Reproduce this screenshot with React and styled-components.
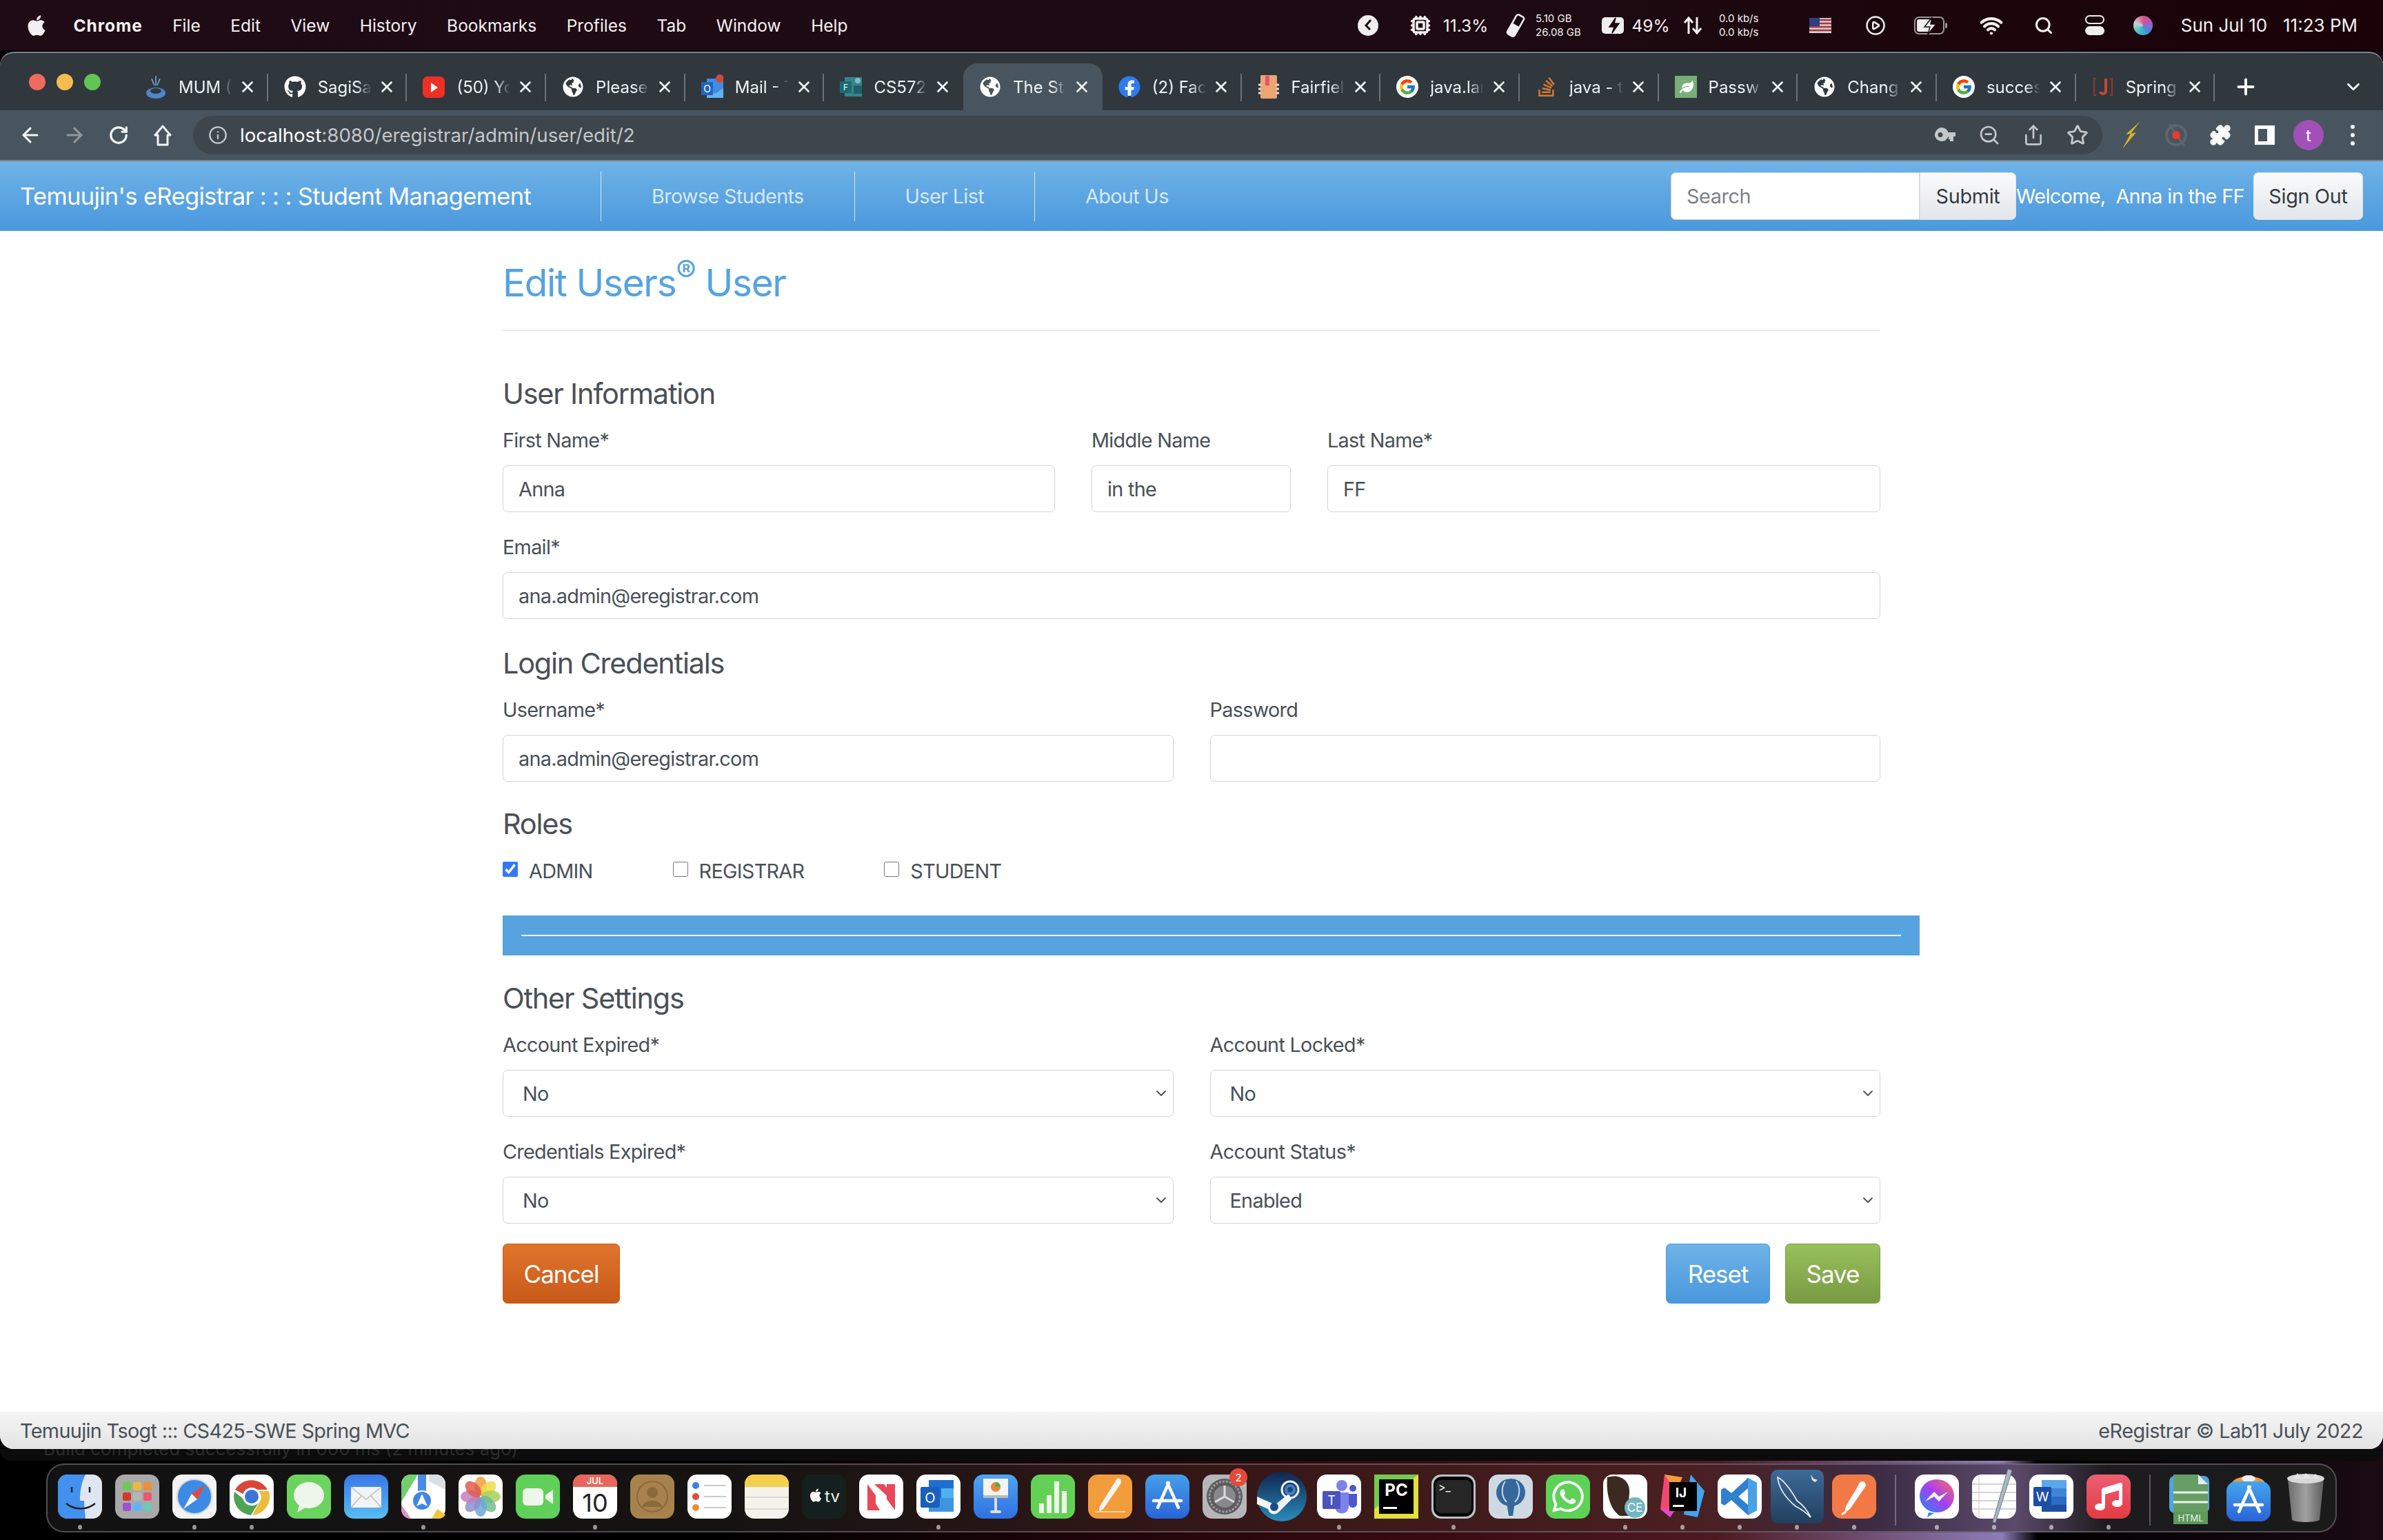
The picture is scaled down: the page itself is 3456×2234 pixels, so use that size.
import React from 'react';
import styled, { createGlobalStyle } from 'styled-components';
import {
  ArrowLeft, ArrowRight, RotateCw, Info, ZoomOut, Share, Star, Puzzle, Plus, ChevronDown,
  X, Cpu, Search, CirclePlay, Wifi,
} from 'lucide-react';
import { FaApple, FaGithub, FaGlobeAmericas, FaFacebook, FaStackOverflow, FaLeaf, FaMusic, FaWhatsapp } from 'react-icons/fa';
import { FcGoogle } from 'react-icons/fc';

const GlobalStyle = createGlobalStyle`
  html, body { margin: 0; padding: 0; background: #000; }
  body { font-family: Inter, "Noto Sans", sans-serif; }
  * { box-sizing: border-box; }
`;

const Desktop = styled.div`
  width: 3456px;
  height: 2234px;
  overflow: hidden;
  display: flex;
  flex-direction: column;
  background: linear-gradient(90deg, #000 0%, #000 30%, #3a0a12 60%, #4d1a22 72%, #8d7cb8 84%, #000 85.5%, #1a0a14 100%);
`;

/* menu bar */
const MenuBar = styled.div`
  height: 75px;
  flex: none;
  display: flex;
  align-items: center;
  padding: 0 33px 0 36px;
  color: #f4f0f1;
  background: linear-gradient(90deg, #1f0b15, #1d0a12 60%, #1a0207);
  border-bottom: 2px solid #0a0406;
`;

const MenuItems = styled.div`
  display: flex;
  align-items: center;
  gap: 43.5px;
  font-size: 24.5px;
`;

const AppleSlot = styled.span`
  display: flex;
  margin-right: -7px;
`;

const MenuItem = styled.span`
  font-weight: ${p => (p.$bold ? 700 : 400)};
  letter-spacing: ${p => (p.$bold ? '0.9px' : '0')};
`;

const StatusRow = styled.div`
  margin-left: auto;
  display: flex;
  align-items: center;
`;

const StatusSlot = styled.div`
  width: ${p => p.$w}px;
  margin-left: ${p => p.$ml}px;
  display: flex;
  align-items: center;
  justify-content: center;
  flex: none;
  white-space: nowrap;
  font-size: ${p => p.$fs || 24.5}px;
`;

const TinyStack = styled.div`
  display: flex;
  flex-direction: column;
  align-items: flex-start;
  font-size: 15px;
  line-height: 20px;
  width: 100%;
`;

const Siri = styled.div`
  width: 28px;
  height: 28px;
  border-radius: 50%;
  background: conic-gradient(#e0508a, #a55bd0, #3f8fd8, #3fc4c0, #c9d0d4, #e0508a);
`;

const ControlCenter = styled.div`
  display: flex;
  flex-direction: column;
  gap: 3px;
`;

const ControlPill = styled.div`
  width: 28px;
  height: 13px;
  border-radius: 7px;
  background: ${p => (p.$on ? '#efefef' : 'transparent')};
  border: 2px solid #efefef;
`;

/* browser window */
const Window = styled.div`
  height: 2027px;
  flex: none;
  display: flex;
  flex-direction: column;
  overflow: hidden;
  border-radius: 20px;
  border-top: 2px solid #7b8285;
  background: #fff;
`;

const TabStrip = styled.div`
  height: 83px;
  flex: none;
  display: flex;
  align-items: flex-end;
  background: #30383e;
`;

const Lights = styled.div`
  width: 187px;
  height: 83px;
  flex: none;
  display: flex;
  align-items: center;
  gap: 16px;
  padding: 0 0 0 42px;
`;

const Light = styled.span`
  width: 24px;
  height: 24px;
  border-radius: 50%;
  background: ${p => p.$c};
`;

const Tab = styled.div`
  width: 201.7px;
  height: 68px;
  flex: none;
  display: flex;
  align-items: center;
  position: relative;
  padding-left: 23px;
  color: #f1f3f4;
  font-size: 24px;
  background: ${p => (p.$active ? '#48555e' : 'transparent')};
  border-radius: 20px 20px 0 0;
  &::after {
    content: '';
    display: ${p => (p.$noSep ? 'none' : 'block')};
    position: absolute;
    right: 0;
    top: 15px;
    height: 40px;
    width: 2px;
    background: #6c7377;
  }
`;

const Favicon = styled.span`
  width: 32px;
  height: 32px;
  flex: none;
  display: flex;
  align-items: center;
  justify-content: center;
`;

const GoogleBadge = styled.span`
  display: flex;
  padding: 3px;
  border-radius: 50%;
  background: #fff;
`;

const FacebookBadge = styled.span`
  display: flex;
  border-radius: 50%;
  background: radial-gradient(#fff 55%, transparent 60%);
  color: #2d7cf0;
`;

const TabTitle = styled.span`
  width: 78px;
  margin-left: 17px;
  overflow: hidden;
  white-space: nowrap;
  flex: none;
  -webkit-mask-image: linear-gradient(90deg, #000 72%, transparent 100%);
  mask-image: linear-gradient(90deg, #000 72%, transparent 100%);
`;

const TabClose = styled.span`
  display: flex;
  margin-left: 9px;
`;

const TabTools = styled.div`
  flex: 1;
  height: 68px;
  display: flex;
  align-items: center;
  justify-content: space-between;
  padding: 0 28px 0 27px;
  color: #fff;
`;

const Toolbar = styled.div`
  height: 74px;
  flex: none;
  display: flex;
  align-items: center;
  padding: 0 12px;
  background: #48555e;
  border-bottom: 2px solid #7f8488;
`;

const ToolButton = styled.span`
  width: 64px;
  flex: none;
  display: flex;
  justify-content: center;
  align-items: center;
  color: ${p => p.$c || '#f1f3f4'};
`;

const Omnibox = styled.div`
  flex: 1;
  height: 56px;
  margin: 0 11px 0 12px;
  border-radius: 28px;
  background: #3e464d;
  display: flex;
  align-items: center;
  padding-left: 22px;
  font-size: 27.7px;
  color: #c3c7ca;
`;

const Url = styled.span`
  margin-left: 18px;
  b { font-weight: 400; color: #fff; }
`;

const OmniIcons = styled.div`
  margin-left: auto;
  margin-right: 4px;
  display: flex;
`;

const SidePanelIcon = styled.span`
  width: 29px;
  height: 28px;
  border: 5px solid #fff;
  border-right-width: 11px;
`;

const Avatar = styled.span`
  width: 44px;
  height: 44px;
  border-radius: 50%;
  background: #a24fb8;
  color: #fff;
  font-size: 24px;
  display: flex;
  align-items: center;
  justify-content: center;
`;

const KebabDots = styled.span`
  display: flex;
  flex-direction: column;
  gap: 6px;
  i { width: 6px; height: 6px; border-radius: 50%; background: #f1f3f4; display: block; }
`;

/* site navbar */
const Navbar = styled.nav`
  height: 101px;
  flex: none;
  display: flex;
  align-items: center;
  padding: 0 29px;
  background: linear-gradient(180deg, #6fb3e7, #4a98dd);
  color: #fff;
  font-size: 28.8px;
  letter-spacing: -0.65px;
`;

const Brand = styled.div`
  width: 842px;
  flex: none;
  font-size: 34.5px;
  white-space: nowrap;
`;

const NavLink = styled.a`
  height: 72px;
  display: flex;
  align-items: center;
  padding: 0 73px;
  border-left: 1.5px solid rgba(255, 255, 255, 0.75);
  color: rgba(255, 255, 255, 0.75);
`;

const NavRight = styled.div`
  margin-left: auto;
  display: flex;
  align-items: center;
`;

const SearchBox = styled.input`
  width: 361px;
  height: 69px;
  border: 1.5px solid #ced4da;
  border-radius: 7px 0 0 7px;
  padding: 0 22px;
  font: inherit;
  letter-spacing: -0.4px;
  color: #495057;
  &::placeholder { color: #7b8188; opacity: 1; }
`;

const LightButton = styled.button`
  width: ${p => p.$w}px;
  height: 69px;
  font: inherit;
  letter-spacing: -0.3px;
  color: #343a40;
  padding: 0;
  border: 1px solid #e0e3e6;
  border-radius: ${p => (p.$joined ? '0 7px 7px 0' : '7px')};
  background: linear-gradient(180deg, #fbfbfc, #e2e6ea);
`;

const Welcome = styled.span`
  width: 344px;
  white-space: nowrap;
`;

/* page body */
const Main = styled.main`
  flex: 1;
  padding-left: 729px;
  background: #fff;
  color: #495057;
`;

const Sheet = styled.div`
  width: 2055px;
`;

const Inner = styled.div`
  width: 1998px;
`;

const PageTitle = styled.h1`
  margin: 42px 0 0;
  font-size: 55px;
  line-height: 66px;
  font-weight: 400;
  color: #56a3e0;
  letter-spacing: -1.4px;
  sup { font-size: 44px; line-height: 0; vertical-align: 21px; }
`;

const TitleRule = styled.hr`
  margin: 35px 0 0;
  border: 0;
  height: 2px;
  background: #e8e9ea;
`;

const SectionTitle = styled.h2`
  margin: ${p => p.$mt}px 0 22px;
  font-size: 41.5px;
  line-height: 48px;
  font-weight: 400;
  color: #495057;
  letter-spacing: -1.25px;
`;

const FieldRow = styled.div`
  display: flex;
  gap: 53px;
`;

const Field = styled.div`
  margin-bottom: 29px;
  flex: ${p => (p.$w ? `0 0 ${p.$w}px` : '1')};
  min-width: 0;
  position: relative;
`;

const Label = styled.label`
  display: block;
  font-size: 28.8px;
  line-height: 44px;
  margin-bottom: 14px;
  letter-spacing: -0.7px;
`;

const TextInput = styled.input`
  display: block;
  width: 100%;
  height: 68px;
  padding: 0 22px;
  border: 1.5px solid #d0d5da;
  border-radius: 7px;
  font: inherit;
  font-size: 28.8px;
  letter-spacing: -0.7px;
  color: #495057;
  background: #fff;
`;

const SelectInput = styled.select`
  display: block;
  width: 100%;
  height: 68px;
  padding: 0 28px;
  border: 1.5px solid #d0d5da;
  border-radius: 7px;
  font: inherit;
  font-size: 28.8px;
  letter-spacing: -0.7px;
  color: #495057;
  background: #fff;
  appearance: none;
`;

const SelectCaret = styled.span`
  position: absolute;
  right: 6px;
  bottom: 22px;
  display: flex;
  color: #495057;
  pointer-events: none;
`;

const RoleRow = styled.div`
  display: flex;
  gap: 116px;
  height: 44px;
  align-items: center;
`;

const Role = styled.label`
  display: flex;
  align-items: center;
  gap: 16px;
  font-size: 28.8px;
  letter-spacing: -0.7px;
`;

const RoleCheck = styled.input`
  width: 22px;
  height: 22px;
  margin: -4px 0 0;
  accent-color: #3478f6;
`;

const BlueBar = styled.div`
  margin-top: 43px;
  height: 58px;
  padding: 0 27px;
  display: flex;
  align-items: center;
  background: #56a3e0;
`;

const BarLine = styled.hr`
  width: 100%;
  margin: 0;
  border: 0;
  height: 2px;
  background: #fff;
`;

const ActionRow = styled.div`
  display: flex;
  align-items: flex-start;
  gap: 22px;
`;

const ActionButton = styled.button`
  width: ${p => p.$w}px;
  height: 87px;
  font: inherit;
  font-size: 35px;
  letter-spacing: -1px;
  color: #fff;
  padding: 0;
  border: 1px solid ${p => p.$to};
  border-radius: 7px;
  background: linear-gradient(180deg, ${p => p.$from}, ${p => p.$to});
  margin-left: ${p => (p.$push ? 'auto' : '0')};
`;

const Footer = styled.footer`
  height: 54px;
  flex: none;
  display: flex;
  align-items: center;
  justify-content: space-between;
  padding: 0 29px;
  font-size: 28.8px;
  color: #495057;
  background: linear-gradient(180deg, #f5f5f5, #e3e3e3);
`;

const FooterNote = styled.span`
  letter-spacing: ${p => p.$ls}px;
`;

/* what shows under the browser */
const IdeStrip = styled.div`
  height: 17px;
  flex: none;
  overflow: hidden;
  background: #0b0c0b;
  border-radius: 0 0 16px 16px;
  padding-left: 63px;
  color: #2b2d2b;
  font-size: 26px;
  line-height: 0;
  white-space: nowrap;
`;

const Dock = styled.div`
  width: 3322px;
  height: 100px;
  margin: 4px 0 0 67px;
  flex: none;
  display: flex;
  padding: 14px 0 0 15px;
  gap: 19px;
  border: 2px solid rgba(120, 115, 125, 0.6);
  border-radius: 26px;
  background: linear-gradient(90deg, #121212 0%, #151312 30%, #361717 52%, #4a1f22 72%, #3d2c44 80%, #5b4a6b 86%, #1d1b1d 90%, #1a1a1a 100%);
`;

const DockItem = styled.div`
  width: 64px;
  flex: none;
  display: flex;
  flex-direction: column;
  align-items: center;
  gap: 9px;
  margin-left: ${p => (p.$ml ? `${p.$ml}px` : '0')};
`;

const DockIcon = styled.svg`
  width: 64px;
  height: 64px;
  display: block;
  overflow: visible;
  font-family: Inter, sans-serif;
`;

const RunDot = styled.span`
  width: 6px;
  height: 7px;
  border-radius: 50%;
  background: ${p => (p.$on ? 'rgba(255,255,255,0.55)' : 'transparent')};
`;

const DockSeparator = styled.div`
  width: 2px;
  height: 74px;
  flex: none;
  margin-left: 8px;
  background: rgba(255, 255, 255, 0.28);
`;

const KeyIcon = () => (
  <svg width="30" height="24" viewBox="0 0 30 24" fill="currentColor">
    <path d="M10 1a10 10 0 1 1-9.6 13H0v-4h.4A10 10 0 0 1 10 1zm-2 7a3.5 3.5 0 1 0 0 7 3.5 3.5 0 0 0 0-7z" fillRule="evenodd" />
    <path d="M16 8h14v6h-3v7h-5v-3h-2v-4h-4z" />
  </svg>
);

const HomeIcon = () => (
  <svg width="26" height="32" viewBox="0 0 26 32" fill="none" stroke="currentColor" strokeWidth="3">
    <path d="M13 3L2 16h4v14h14V16h4z" strokeLinejoin="round" />
  </svg>
);

const UpDownIcon = () => (
  <svg width="28" height="26" viewBox="0 0 28 26" fill="none" stroke="#f4f0f1" strokeWidth="3">
    <path d="M8 25V3M2 9l6-7 6 7M20 1v22M14 17l6 7 6-7" />
  </svg>
);

const statusItems = [
  { w: 48, ml: 0, node: <svg width="32" height="32" viewBox="0 0 32 32"><circle cx="16" cy="16" r="15" fill="#eee" /><path d="M20 8l-7 8 6 6" fill="none" stroke="#1e0a14" strokeWidth="3" /></svg> },
  { w: 40, ml: 32, node: <Cpu size={30} strokeWidth={2.8} /> },
  { w: 65, ml: 13, node: '11.3%' },
  { w: 32, ml: 24, node: <svg width="30" height="34" viewBox="0 0 30 34"><g transform="rotate(30 15 17)"><rect x="9" y="1" width="12" height="32" rx="3" fill="none" stroke="#eee" strokeWidth="2.5" /><rect x="9" y="16" width="12" height="17" rx="3" fill="#eee" /></g></svg> },
  { w: 73, ml: 13, node: <TinyStack><span>5.10 GB</span><span>26.08 GB</span></TinyStack> },
  { w: 36, ml: 22, node: <svg width="34" height="24" viewBox="0 0 34 24"><rect width="32" height="24" rx="5" fill="#eee" /><path d="M20 1L11 14h7l-3 9 10-14h-7z" fill="#1d0a12" stroke="#1d0a12" strokeWidth="1.5" /></svg> },
  { w: 50, ml: 11, node: '49%' },
  { w: 28, ml: 22, node: <UpDownIcon /> },
  { w: 62, ml: 24, node: <TinyStack><span>0.0 kb/s</span><span>0.0 kb/s</span></TinyStack> },
  { w: 32, ml: 69, node: <svg width="32" height="22" viewBox="0 0 32 22"><rect width="32" height="22" fill="#c9d2e4" /><path d="M0 3h32M0 8h32M0 13h32M0 18h32" stroke="#b5332e" strokeWidth="2.6" /><rect width="15" height="12" fill="#2f3f7f" /></svg> },
  { w: 30, ml: 49, node: <CirclePlay size={30} strokeWidth={2} /> },
  { w: 50, ml: 41, node: <svg width="50" height="26" viewBox="0 0 50 26"><rect x="1" y="1" width="42" height="24" rx="6" fill="none" stroke="#9a9597" strokeWidth="2" /><rect x="4" y="4" width="20" height="18" rx="3" fill="#eee" /><rect x="45" y="9" width="3" height="8" rx="1.5" fill="#9a9597" /><path d="M26 1L15 15h8l-3 11 12-15h-8z" fill="#eee" stroke="#1d0a12" strokeWidth="1.5" /></svg> },
  { w: 36, ml: 44, node: <Wifi size={34} strokeWidth={3} /> },
  { w: 30, ml: 43, node: <Search size={28} strokeWidth={2.6} /> },
  { w: 30, ml: 44, node: <ControlCenter><ControlPill /><ControlPill $on /></ControlCenter> },
  { w: 30, ml: 40, node: <Siri /> },
  { w: 125, ml: 40, fs: 26, node: 'Sun Jul 10' },
  { w: 116, ml: 19, fs: 26, node: '11:23 PM' },
];

const tabs = [
  { title: 'MUM (', icon: <svg width="32" height="36" viewBox="0 0 32 36"><ellipse cx="16" cy="27" rx="14" ry="8" fill="#4f86c9" /><ellipse cx="16" cy="24" rx="8" ry="4" fill="#30383e" /><path d="M16 2v14M10 6l4 10M22 6l-4 10" stroke="#7fb0e0" strokeWidth="1.5" /></svg> },
  { title: 'SagiSa', icon: <FaGithub size={32} color="#fff" /> },
  { title: '(50) Yo', icon: <svg width="32" height="32" viewBox="0 0 32 32"><rect width="32" height="31" rx="7" y="1" fill="#ee2f24" /><path d="M12 10l10 7-10 7z" fill="#fff" /></svg> },
  { title: 'Please', icon: <FaGlobeAmericas size={30} color="#fff" /> },
  { title: 'Mail - T', icon: <svg width="32" height="36" viewBox="0 0 32 36"><rect x="8" y="6" width="24" height="28" fill="#3f8de0" /><path d="M8 20l12 8 12-8v14H8z" fill="#62b2ef" /><rect y="11" width="17" height="19" fill="#1f64bf" /><text x="8.5" y="26" fontSize="14" fill="#fff" textAnchor="middle" fontFamily="Inter">O</text><circle cx="27" cy="6" r="6" fill="#d0493e" /></svg> },
  { title: 'CS572', noSep: true, icon: <svg width="32" height="32" viewBox="0 0 32 32"><rect x="7" y="2" width="25" height="28" fill="#37858c" /><rect x="20" y="14" width="12" height="12" fill="#1f5f66" /><circle cx="26" cy="7" r="4" fill="#79c0c5" /><rect y="8" width="17" height="17" fill="#1a6b72" /><text x="8.5" y="21" fontSize="12" fill="#fff" textAnchor="middle" fontFamily="Inter">F</text></svg> },
  { title: 'The St', active: true, noSep: true, icon: <FaGlobeAmericas size={30} color="#fff" /> },
  { title: '(2) Fac', icon: <FacebookBadge><FaFacebook size={32} /></FacebookBadge> },
  { title: 'Fairfiel', icon: <svg width="30" height="34" viewBox="0 0 30 34"><rect x="3" y="0" width="24" height="34" rx="2" fill="#eda673" /><rect x="10" y="1" width="6" height="14" fill="#e2566c" /><path d="M0 14h4M0 20h4M0 26h4M26 14h4M26 20h4M26 26h4" stroke="#dfe2e4" strokeWidth="3" /></svg> },
  { title: 'java.lan', icon: <GoogleBadge><FcGoogle size={26} /></GoogleBadge> },
  { title: 'java - t', icon: <FaStackOverflow size={32} color="#d9782e" /> },
  { title: 'Passw', icon: <svg width="32" height="32" viewBox="0 0 32 32"><rect width="32" height="32" fill="#78ae78" /><FaLeaf x="7" y="6" size={20} color="#fff" /></svg> },
  { title: 'Chang', icon: <FaGlobeAmericas size={30} color="#fff" /> },
  { title: 'succes', icon: <GoogleBadge><FcGoogle size={26} /></GoogleBadge> },
  { title: 'Spring', icon: <svg width="32" height="30" viewBox="0 0 32 30"><path d="M6 3H3v24h3M26 3h3v24h-3" fill="none" stroke="#8e3a28" strokeWidth="2" /><path d="M20 3v18c0 5-7 5-8 1" fill="none" stroke="#c04a2c" strokeWidth="4" /></svg> },
];

const Tile = ({ fill, children, rx = 14 }) => (
  <DockIcon viewBox="0 0 64 64">
    <rect width="64" height="64" rx={rx} fill={fill} />
    {children}
  </DockIcon>
);

const Grad = ({ id, from, to }) => (
  <defs>
    <linearGradient id={id} x1="0" y1="0" x2="0" y2="1">
      <stop offset="0" stopColor={from} />
      <stop offset="1" stopColor={to} />
    </linearGradient>
  </defs>
);

const petals = ['#f0a03c', '#f1dc4c', '#a9cf5e', '#6ebd8f', '#6aa9d8', '#8b8fd0', '#c27fb8', '#e05c50'];

const appStoreGlyph = (
  <g stroke="#fff" strokeWidth="4.5" strokeLinecap="round" fill="none">
    <path d="M32 12l16 36M34 12L18 48M12 38h40" />
  </g>
);

const dockApps = [
  { on: true, icon: <Tile fill="#dfe6f0"><path d="M14 0h26c-6 12-8 24-8 38h6c0 8 1 16 2 26H14C6 64 0 58 0 50V14C0 6 6 0 14 0z" fill="#4391ee" /><path d="M20 18v8M46 18v8" stroke="#222" strokeWidth="2.5" /><path d="M12 42c12 10 30 10 42 0" fill="none" stroke="#222" strokeWidth="2.5" /></Tile> },
  { icon: <Tile fill="#a9a9a9">{[['#6ccc50', '#f0b740', '#ed8f35'], ['#cf3a2b', '#b3b7b9', '#ea5a6b'], ['#9a52d8', '#5ab8f5', '#6fc8b0']].map((r, j) => r.map((c, i) => <rect key={`${i}${j}`} x={11 + i * 15} y={11 + j * 15} width="12" height="12" rx="3" fill={c} />))}</Tile> },
  { on: true, icon: <Tile fill="#f3f3f3"><circle cx="32" cy="32" r="25" fill="#3c8ae4" /><circle cx="32" cy="32" r="25" fill="none" stroke="#cfd8e2" strokeWidth="2" /><path d="M48 14L28 28l8 8z" fill="#e8473a" /><path d="M16 50l12-22 8 8z" fill="#f4f4f4" /></Tile> },
  { on: true, icon: <Tile fill="#fff"><path d="M8 22a27 27 0 0 1 47 0H32a11 11 0 0 0-11 7z" fill="#d8473a" /><path d="M57 24a27 27 0 0 1-24 35l11-20a12 12 0 0 0-2-15z" fill="#efbb3c" /><path d="M7 25a27 27 0 0 0 24 34l11-18a12 12 0 0 1-20-4z" fill="#4fa354" /><circle cx="32" cy="32" r="13" fill="#fff" /><circle cx="32" cy="32" r="10" fill="#3b75d8" /></Tile> },
  { icon: <Tile fill="#6bd45f"><ellipse cx="32" cy="30" rx="22" ry="19" fill="#eef6ea" /><path d="M18 44l-3 11 12-7z" fill="#eef6ea" /></Tile> },
  { icon: <Tile fill="url(#mailG)"><Grad id="mailG" from="#3a77e6" to="#59bdf6" /><rect x="10" y="18" width="44" height="30" rx="2" fill="#f3f3f3" /><path d="M10 18l22 18 22-18M10 48l16-18M54 48L38 30" fill="none" stroke="#b9c0c8" strokeWidth="1.5" /></Tile> },
  { on: true, icon: <Tile fill="#fff"><path d="M0 14C0 6 6 0 14 0h10L0 40z" fill="#72cf6c" /><path d="M40 0h10c8 0 14 6 14 14v8L40 10z" fill="#dcdfe2" /><path d="M24 0h12v34H24z" fill="#4d8ae8" /><path d="M0 44l14 20C6 64 0 58 0 50z" fill="#de8fc0" /><path d="M44 64l8-14 12 8c-2 4-6 6-10 6z" fill="#f2c53c" /><circle cx="30" cy="38" r="14" fill="#3f86e6" stroke="#fff" strokeWidth="2" /><path d="M30 28l8 18-8-4-8 4z" fill="#fff" /></Tile> },
  { icon: <Tile fill="#fff">{petals.map((c, i) => <ellipse key={c} cx="32" cy="17" rx="9" ry="14" fill={c} opacity="0.85" transform={`rotate(${i * 45} 32 32)`} />)}</Tile> },
  { icon: <Tile fill="#61d05a"><rect x="10" y="20" width="30" height="25" rx="6" fill="#eef5ea" /><path d="M43 30l11-8v21l-11-8z" fill="#eef5ea" /></Tile> },
  { on: true, icon: <Tile fill="#fff"><path d="M0 18V14C0 6 6 0 14 0h36c8 0 14 6 14 14v4z" fill="#e8675a" /><text x="32" y="14" fontSize="13" fontWeight="600" fill="#fff" textAnchor="middle">JUL</text><text x="32" y="54" fontSize="36" fill="#222" textAnchor="middle">10</text></Tile> },
  { icon: <Tile fill="#a8824d"><circle cx="32" cy="32" r="22" fill="none" stroke="#8a6a3c" strokeWidth="2" /><circle cx="32" cy="26" r="8" fill="#8a6a3c" /><path d="M17 47c4-12 26-12 30 0" fill="#8a6a3c" /></Tile> },
  { icon: <Tile fill="#fff">{['#3d7fe6', '#e24a3c', '#ea8f34'].map((c, i) => <g key={c}><circle cx="12" cy={16 + i * 16} r="5" fill={c} /><rect x="24" y={15 + i * 16} width="32" height="2" fill="#ccc" /></g>)}</Tile> },
  { icon: <Tile fill="#f4f2ea"><path d="M0 18V14C0 6 6 0 14 0h36c8 0 14 6 14 14v4z" fill="#f6cf4f" /><path d="M0 33h64M0 50h64" stroke="#dcdbd4" strokeWidth="2" /></Tile> },
  { icon: <Tile fill="#15201e"><FaApple x="9" y="19" size={22} color="#fff" /><text x="44" y="40" fontSize="24" fill="#eee" textAnchor="middle">tv</text></Tile> },
  { icon: <Tile fill="#fff"><path d="M12 14h12v38H12z" fill="#e9475a" /><path d="M40 14h12v38H40z" fill="#e9475a" /><path d="M12 14h12l28 38H40z" fill="#fff" /><path d="M22 14h14l16 20v8z" fill="#e9475a" /><path d="M12 22l18 30H18l-6-10z" fill="#e9475a" /></Tile> },
  { on: true, icon: <Tile fill="#fff"><rect x="18" y="8" width="36" height="46" fill="#1f6fd0" /><rect x="36" y="20" width="18" height="14" fill="#4eb0ec" /><rect x="18" y="34" width="36" height="20" fill="#3f94e0" /><rect x="6" y="18" width="28" height="30" rx="2" fill="#1b5fbd" /><text x="20" y="41" fontSize="20" fill="#fff" textAnchor="middle">O</text></Tile> },
  { icon: <Tile fill="url(#keyG)"><Grad id="keyG" from="#4fa4f4" to="#2f70e0" /><rect x="14" y="6" width="36" height="28" fill="#f4f4f4" /><circle cx="32" cy="18" r="7" fill="#e8883c" /><path d="M32 11a7 7 0 0 1 7 7h-7z" fill="#4caf50" /><rect x="14" y="30" width="36" height="4" fill="#bbb" /><rect x="30" y="34" width="4" height="20" fill="#ddd" /><rect x="24" y="52" width="16" height="4" rx="2" fill="#ddd" /></Tile> },
  { icon: <Tile fill="#63d155"><rect x="12" y="42" width="7" height="14" fill="#eef5ea" /><rect x="23" y="30" width="7" height="26" fill="#eef5ea" /><rect x="34" y="10" width="7" height="46" fill="#eef5ea" /><rect x="45" y="24" width="7" height="32" fill="#eef5ea" /></Tile> },
  { icon: <Tile fill="#f29c3c"><path d="M42 6c6-2 7 3 5 8L22 50l-6 4 1-8z" fill="#f7f4ee" /><rect x="10" y="53" width="44" height="2" fill="#f6cf9e" /></Tile> },
  { icon: <Tile fill="url(#asG)"><Grad id="asG" from="#45a0ea" to="#2a63d8" />{appStoreGlyph}</Tile> },
  { icon: <Tile fill="#b4b6b8"><circle cx="32" cy="32" r="26" fill="#5c5c5e" /><circle cx="32" cy="32" r="22" fill="none" stroke="#9c9c9e" strokeWidth="3" strokeDasharray="3 2" /><circle cx="32" cy="32" r="16" fill="#88888a" /><path d="M32 32V16M32 32L18 40M32 32l14 8" stroke="#ddd" strokeWidth="3" /><circle cx="52" cy="4" r="13" fill="#e24a3c" /><text x="52" y="10" fontSize="15" fill="#fff" textAnchor="middle">2</text></Tile> },
  { icon: <DockIcon viewBox="0 0 64 64"><Grad id="stG" from="#10244e" to="#2a8cbc" /><circle cx="32" cy="32" r="36" fill="url(#stG)" /><path d="M-4 32l20 9 6 3 20-16 4 8-18 18c-6 6-14 4-16-4l-16-7z" fill="#f1f4f7" /><circle cx="44" cy="22" r="12" fill="none" stroke="#f1f4f7" strokeWidth="3" /><circle cx="44" cy="22" r="6" fill="none" stroke="#4c7cc0" strokeWidth="4" /><circle cx="21" cy="47" r="6" fill="#1c4a86" /></DockIcon> },
  { on: true, icon: <Tile fill="#fff"><circle cx="36" cy="16" r="8" fill="#7b83eb" /><circle cx="52" cy="20" r="5" fill="#5059c9" /><path d="M26 26h20v20c0 14-20 14-20 0z" fill="#7b83eb" /><path d="M46 28h12v14c0 8-12 8-12 0z" fill="#5059c9" /><rect x="8" y="24" width="26" height="26" rx="2" fill="#4b53bc" /><text x="21" y="44" fontSize="18" fill="#fff" textAnchor="middle">T</text></Tile> },
  { icon: <Tile fill="#e3e03a" rx={0}><path d="M0 0h64L0 50z" fill="#58c455" opacity="0.8" /><rect x="7" y="7" width="50" height="50" fill="#000" /><text x="32" y="31" fontSize="24" fontWeight="700" fill="#fff" textAnchor="middle">PC</text><rect x="13" y="47" width="20" height="3" fill="#fff" /></Tile> },
  { on: true, icon: <Tile fill="#b9c2c8"><rect x="3" y="3" width="58" height="58" rx="12" fill="#050505" /><rect x="6" y="8" width="52" height="48" rx="8" fill="#262626" /><text x="10" y="24" fontSize="16" fill="#fff">&gt;_</text></Tile> },
  { icon: <Tile fill="#cfd9e2"><ellipse cx="32" cy="26" rx="21" ry="20" fill="#34689a" /><path d="M26 40h12l-3 20h-6z" fill="#34689a" /><path d="M24 10c-6 8-6 22 2 30M40 10c6 8 6 22-2 30" fill="none" stroke="#cfd9e2" strokeWidth="2" /></Tile> },
  { icon: <Tile fill="#5dd256"><FaWhatsapp x="6" y="6" size={52} color="#fff" /></Tile> },
  { on: true, icon: <Tile fill="#fff"><path d="M6 4c20-6 34 6 32 24-2 14 2 24 8 32H24C10 50 4 28 6 4z" fill="#3a2a22" /><circle cx="46" cy="48" r="15" fill="#72b6c0" /><text x="46" y="54" fontSize="17" fill="#fff" textAnchor="middle">CE</text></Tile> },
  { on: true, icon: <DockIcon viewBox="0 0 64 64"><path d="M6 0l22 6L14 62 0 50z" fill="#f2476e" /><path d="M6 0l26 4-10 22z" fill="#f29c3c" /><path d="M44 0l20 24-10 38-20-4z" fill="#3fa5ee" /><path d="M0 50l14 12 10-14z" fill="#e34ac8" /><rect x="13" y="11" width="40" height="42" fill="#000" /><text x="30" y="33" fontSize="19" fontWeight="700" fill="#fff" textAnchor="middle">IJ</text><rect x="18" y="44" width="16" height="3" fill="#fff" /></DockIcon> },
  { on: true, icon: <Tile fill="#fff"><path d="M44 5l13 7v40l-13 7-24-22-10 8-5-3V22l5-3 10 8z" fill="#2f80cf" /><path d="M44 5l13 7v40l-13 7z" fill="#4aa0e4" /><path d="M44 20L30 32l14 12z" fill="#fff" /></Tile> },
  { on: true, icon: <DockIcon viewBox="0 0 64 64"><Grad id="myG" from="#3d6a99" to="#223f5c" /><rect x="-6" y="-7" width="77" height="78" rx="10" fill="url(#myG)" /><path d="M4 4c10 4 24 26 28 34 6 4 14 12 20 24-6-6-14-12-22-16C18 36 6 22 4 4z" fill="none" stroke="#e8edf2" strokeWidth="1.8" /><path d="M52 0l4 6 6 2-4 3-4-3z" fill="#e8edf2" /></DockIcon> },
  { on: true, icon: <Tile fill="#f37a47"><path d="M44 10c4 0 6 4 4 8L26 50l-8 6 2-10 18-30c1-4 3-6 6-6z" fill="#fff" /><path d="M14 58l6-4" stroke="#fff" strokeWidth="3" /></Tile> },
  { separator: true },
  { on: true, icon: <Tile fill="#fff"><defs><linearGradient id="msG" x1="0" y1="1" x2="1" y2="0"><stop offset="0" stopColor="#1e8cf5" /><stop offset="0.5" stopColor="#a53ff0" /><stop offset="1" stopColor="#ff6a6a" /></linearGradient></defs><ellipse cx="32" cy="31" rx="25" ry="24" fill="url(#msG)" /><path d="M20 55l-2 7 10-6z" fill="#1e8cf5" /><path d="M15 39l13-14 7 7 13-7-13 14-7-7z" fill="#fff" /></Tile> },
  { on: true, icon: <Tile fill="#fff"><path d="M0 14h64M0 26h64M0 38h64M0 50h64" stroke="#d4d4d4" strokeWidth="2" /><path d="M10 0v64" stroke="#f0b8b8" strokeWidth="1" /><path d="M52-8l6 2-24 76-4-1z" fill="#a9b8c6" stroke="#6a7784" strokeWidth="1" /></Tile> },
  { on: true, icon: <Tile fill="#fff"><rect x="18" y="8" width="36" height="46" rx="2" fill="#2b6bc8" /><rect x="18" y="8" width="36" height="12" fill="#5ba5ea" /><rect x="18" y="20" width="36" height="12" fill="#3f86d8" /><rect x="18" y="44" width="36" height="10" fill="#1f4ea0" /><rect x="6" y="18" width="26" height="28" rx="2" fill="#1a4fa8" /><text x="19" y="39" fontSize="19" fill="#fff" textAnchor="middle">W</text></Tile> },
  { on: true, icon: <Tile fill="url(#muG)"><Grad id="muG" from="#ed5f72" to="#e33b44" /><FaMusic x="12" y="12" size={40} color="#fff" /></Tile> },
  { separator: true },
  { icon: <DockIcon viewBox="0 0 64 64"><rect x="0" y="2" width="58" height="54" rx="8" fill="#4fa5e0" /><path d="M6 0h36l14 14v58H6z" fill="#659f66" /><path d="M42 0l14 14H42z" fill="#e8ecf0" /><path d="M6 26h50M6 40h50" stroke="#f3f4ee" strokeWidth="3" /><rect x="6" y="54" width="50" height="18" fill="#5b9a5d" /><text x="31" y="68" fontSize="13" fill="#e8f0e8" textAnchor="middle">HTML</text></DockIcon> },
  { icon: <DockIcon viewBox="0 0 64 64"><Grad id="as2G" from="#45a6ee" to="#2a63d8" /><path d="M8 12c4-12 44-12 48 0v10H8z" fill="#ef9a3c" /><ellipse cx="32" cy="6" rx="10" ry="5" fill="#eee" /><rect y="10" width="64" height="58" rx="14" fill="url(#as2G)" /><g transform="translate(0 6)">{appStoreGlyph}</g></DockIcon> },
  { icon: <DockIcon viewBox="0 0 64 64"><defs><linearGradient id="trG" x1="0" y1="0" x2="1" y2="0"><stop offset="0" stopColor="#6e6e6e" /><stop offset="0.5" stopColor="#a0a0a0" /><stop offset="1" stopColor="#5c5c5c" /></linearGradient></defs><path d="M6 6h52l-6 60c-6 4-34 4-40 0z" fill="url(#trG)" /><ellipse cx="32" cy="6" rx="27" ry="7" fill="#d8d8d8" /><path d="M14 6l6-8 6 8 6-8 8 8 6-7 6 7z" fill="#e4e6e8" /></DockIcon> },
];

const Input = ({ label, value, width }) => (
  <Field $w={width}>
    <Label>{label}</Label>
    <TextInput readOnly value={value} />
  </Field>
);

const Dropdown = ({ label, value }) => (
  <Field>
    <Label>{label}</Label>
    <SelectInput defaultValue={value}>
      <option>{value}</option>
    </SelectInput>
    <SelectCaret><ChevronDown size={24} strokeWidth={1.8} /></SelectCaret>
  </Field>
);

function App() {
  return (
    <>
      <GlobalStyle />
      <Desktop>
        <MenuBar>
          <MenuItems>
            <AppleSlot><FaApple size={34} /></AppleSlot>
            <MenuItem $bold>Chrome</MenuItem>
            {['File', 'Edit', 'View', 'History', 'Bookmarks', 'Profiles', 'Tab', 'Window', 'Help'].map(m => (
              <MenuItem key={m}>{m}</MenuItem>
            ))}
          </MenuItems>
          <StatusRow>
            {statusItems.map((s, i) => (
              <StatusSlot key={i} $w={s.w} $ml={s.ml} $fs={s.fs}>{s.node}</StatusSlot>
            ))}
          </StatusRow>
        </MenuBar>

        <Window>
          <TabStrip>
            <Lights>
              <Light $c="#ee6a5e" />
              <Light $c="#f5bd4f" />
              <Light $c="#61c454" />
            </Lights>
            {tabs.map(t => (
              <Tab key={t.title} $active={t.active} $noSep={t.noSep}>
                <Favicon>{t.icon}</Favicon>
                <TabTitle>{t.title}</TabTitle>
                <TabClose><X size={26} strokeWidth={2.5} /></TabClose>
              </Tab>
            ))}
            <TabTools>
              <Plus size={36} strokeWidth={2.6} />
              <ChevronDown size={30} strokeWidth={2.2} />
            </TabTools>
          </TabStrip>

          <Toolbar>
            <ToolButton><ArrowLeft size={34} strokeWidth={2.2} /></ToolButton>
            <ToolButton $c="#8f979c"><ArrowRight size={34} strokeWidth={2.2} /></ToolButton>
            <ToolButton><RotateCw size={30} strokeWidth={2.6} /></ToolButton>
            <ToolButton><HomeIcon /></ToolButton>
            <Omnibox>
              <Info size={28} color="#c3c7ca" strokeWidth={2} />
              <Url><b>localhost</b>:8080/eregistrar/admin/user/edit/2</Url>
              <OmniIcons>
                <ToolButton $c="#c3c7ca"><KeyIcon /></ToolButton>
                <ToolButton $c="#c3c7ca"><ZoomOut size={32} strokeWidth={2} /></ToolButton>
                <ToolButton $c="#c3c7ca"><Share size={32} strokeWidth={2} /></ToolButton>
                <ToolButton $c="#c3c7ca"><Star size={32} strokeWidth={2.2} /></ToolButton>
              </OmniIcons>
            </Omnibox>
            <ToolButton>
              <svg width="32" height="40" viewBox="0 0 32 40"><path d="M28 0L14 18l8-2L2 40l12-22-7 1z" fill="#d9b52c" /></svg>
            </ToolButton>
            <ToolButton>
              <svg width="32" height="40" viewBox="0 0 32 40"><circle cx="16" cy="20" r="14" fill="none" stroke="#5f666c" strokeWidth="4" /><path d="M6 4l22 32" stroke="#5f666c" strokeWidth="3" /><circle cx="16" cy="20" r="6" fill="#ea3a2c" /></svg>
            </ToolButton>
            <ToolButton><Puzzle size={32} fill="#fff" strokeWidth={2} /></ToolButton>
            <ToolButton><SidePanelIcon /></ToolButton>
            <ToolButton><Avatar>t</Avatar></ToolButton>
            <ToolButton><KebabDots><i /><i /><i /></KebabDots></ToolButton>
          </Toolbar>

          <Navbar>
            <Brand>Temuujin's eRegistrar : : : Student Management</Brand>
            <NavLink>Browse Students</NavLink>
            <NavLink>User List</NavLink>
            <NavLink>About Us</NavLink>
            <NavRight>
              <SearchBox placeholder="Search" />
              <LightButton $joined $w={140}>Submit</LightButton>
              <Welcome>Welcome,&nbsp; Anna in the FF</Welcome>
              <LightButton $w={159}>Sign Out</LightButton>
            </NavRight>
          </Navbar>

          <Main>
            <Sheet>
              <Inner>
                <PageTitle>Edit Users<sup>®</sup> User</PageTitle>
                <TitleRule />
                <SectionTitle $mt={67}>User Information</SectionTitle>
                <FieldRow>
                  <Input label="First Name*" value="Anna" width={801} />
                  <Input label="Middle Name" value="in the" width={289} />
                  <Input label="Last Name*" value="FF" />
                </FieldRow>
                <Input label="Email*" value="ana.admin@eregistrar.com" />
                <SectionTitle $mt={40}>Login Credentials</SectionTitle>
                <FieldRow>
                  <Input label="Username*" value="ana.admin@eregistrar.com" />
                  <Input label="Password" value="" />
                </FieldRow>
                <SectionTitle $mt={8}>Roles</SectionTitle>
                <RoleRow>
                  <Role><RoleCheck type="checkbox" defaultChecked />ADMIN</Role>
                  <Role><RoleCheck type="checkbox" />REGISTRAR</Role>
                  <Role><RoleCheck type="checkbox" />STUDENT</Role>
                </RoleRow>
              </Inner>
              <BlueBar><BarLine /></BlueBar>
              <Inner>
                <SectionTitle $mt={38}>Other Settings</SectionTitle>
                <FieldRow>
                  <Dropdown label="Account Expired*" value="No" />
                  <Dropdown label="Account Locked*" value="No" />
                </FieldRow>
                <FieldRow>
                  <Dropdown label="Credentials Expired*" value="No" />
                  <Dropdown label="Account Status*" value="Enabled" />
                </FieldRow>
                <ActionRow>
                  <ActionButton $w={170} $from="#e0742c" $to="#c85a1a">Cancel</ActionButton>
                  <ActionButton $push $w={151} $from="#6fb3e7" $to="#4a98dd">Reset</ActionButton>
                  <ActionButton $w={138} $from="#98c05c" $to="#789a42">Save</ActionButton>
                </ActionRow>
              </Inner>
            </Sheet>
          </Main>

          <Footer>
            <FooterNote $ls={-0.65}>Temuujin Tsogt ::: CS425-SWE Spring MVC</FooterNote>
            <FooterNote $ls={-0.5}>eRegistrar © Lab11 July 2022</FooterNote>
          </Footer>
        </Window>

        <IdeStrip>Build completed successfully in 000 ms (2 minutes ago)</IdeStrip>

        <Dock>
          {dockApps.map((app, i) =>
            app.separator ? (
              <DockSeparator key={i} />
            ) : (
              <DockItem key={i} $ml={dockApps[i - 1] && dockApps[i - 1].separator ? 8 : 0}>
                {app.icon}
                <RunDot $on={app.on} />
              </DockItem>
            )
          )}
        </Dock>
      </Desktop>
    </>
  );
}

export default App;
